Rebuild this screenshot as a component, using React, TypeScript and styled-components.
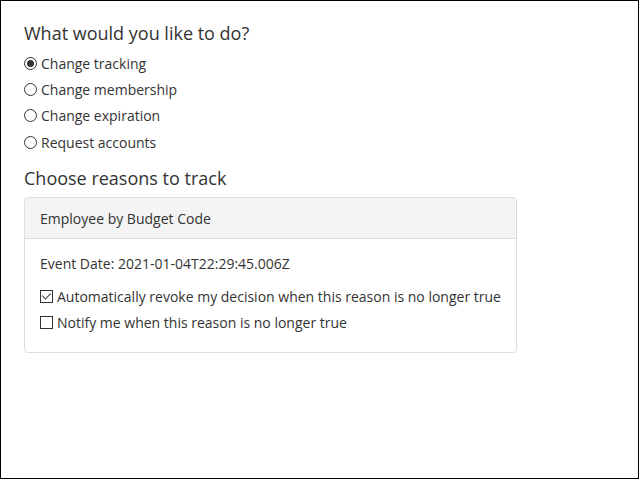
import React, { useState } from 'react';
import styled, { createGlobalStyle } from 'styled-components';

const GlobalStyle = createGlobalStyle`
  html, body {
    margin: 0;
    padding: 0;
    background: #fff;
  }

  body {
    font-family: 'Open Sans', 'Liberation Sans', sans-serif;
    color: #333;
  }
`;

const Frame = styled.div`
  box-sizing: border-box;
  width: 639px;
  height: 479px;
  border: 1px solid #000;
  padding: 19px 23px 0;
`;

const Heading = styled.h3`
  margin: 0;
  font-size: 18px;
  font-weight: 400;
  line-height: 26px;
  color: #333;
`;

const Options = styled.div`
  display: flex;
  flex-direction: column;
  margin: 4px 0 10px;
`;

const OptionRow = styled.label`
  display: flex;
  align-items: center;
  gap: 4px;
  height: 26.3px;
  font-size: 14px;
  cursor: pointer;
`;

const Radio = styled.input.attrs({ type: 'radio' })`
  appearance: none;
  box-sizing: border-box;
  width: 13px;
  height: 13px;
  margin: 0;
  border: 1px solid #333;
  border-radius: 50%;
  background: #fff;
  position: relative;

  &:checked::after {
    content: '';
    position: absolute;
    left: 2px;
    top: 2px;
    width: 7px;
    height: 7px;
    border-radius: 50%;
    background: #333;
  }
`;

const Card = styled.div`
  box-sizing: border-box;
  width: 493px;
  margin-top: 6px;
  border: 1px solid #ddd;
  border-radius: 4px;
  overflow: hidden;
`;

const CardHeader = styled.div`
  height: 40px;
  display: flex;
  align-items: center;
  padding: 0 15px;
  font-size: 14px;
  background: #f4f4f4;
  border-bottom: 1px solid #ddd;
`;

const CardBody = styled.div`
  padding: 15px 15px 17px;
  font-size: 14px;
`;

const EventDate = styled.div`
  line-height: 20px;
  margin-bottom: 9px;
`;

const CheckRow = styled.label`
  display: flex;
  align-items: center;
  gap: 4px;
  height: 26px;
  cursor: pointer;
`;

const Check = styled.input.attrs({ type: 'checkbox' })`
  appearance: none;
  box-sizing: border-box;
  width: 13px;
  height: 13px;
  margin: 0;
  border: 1px solid #333;
  background: #fff;
  position: relative;

  &:checked::after {
    content: '';
    position: absolute;
    left: 3px;
    top: 0px;
    width: 4px;
    height: 7px;
    border: solid #333;
    border-width: 0 1px 1px 0;
    transform: rotate(45deg);
  }
`;

const actions = [
  'Change tracking',
  'Change membership',
  'Change expiration',
  'Request accounts',
];

const App: React.FC = () => {
  const [action, setAction] = useState(actions[0]);
  const [revoke, setRevoke] = useState(true);
  const [notify, setNotify] = useState(false);

  return (
    <>
      <GlobalStyle />
      <Frame>
        <Heading>What would you like to do?</Heading>
        <Options>
          {actions.map((a) => (
            <OptionRow key={a}>
              <Radio name="action" checked={action === a} onChange={() => setAction(a)} />
              {a}
            </OptionRow>
          ))}
        </Options>
        <Heading>Choose reasons to track</Heading>
        <Card>
          <CardHeader>Employee by Budget Code</CardHeader>
          <CardBody>
            <EventDate>Event Date: 2021-01-04T22:29:45.006Z</EventDate>
            <CheckRow>
              <Check checked={revoke} onChange={() => setRevoke(!revoke)} />
              Automatically revoke my decision when this reason is no longer true
            </CheckRow>
            <CheckRow>
              <Check checked={notify} onChange={() => setNotify(!notify)} />
              Notify me when this reason is no longer true
            </CheckRow>
          </CardBody>
        </Card>
      </Frame>
    </>
  );
};

export default App;
